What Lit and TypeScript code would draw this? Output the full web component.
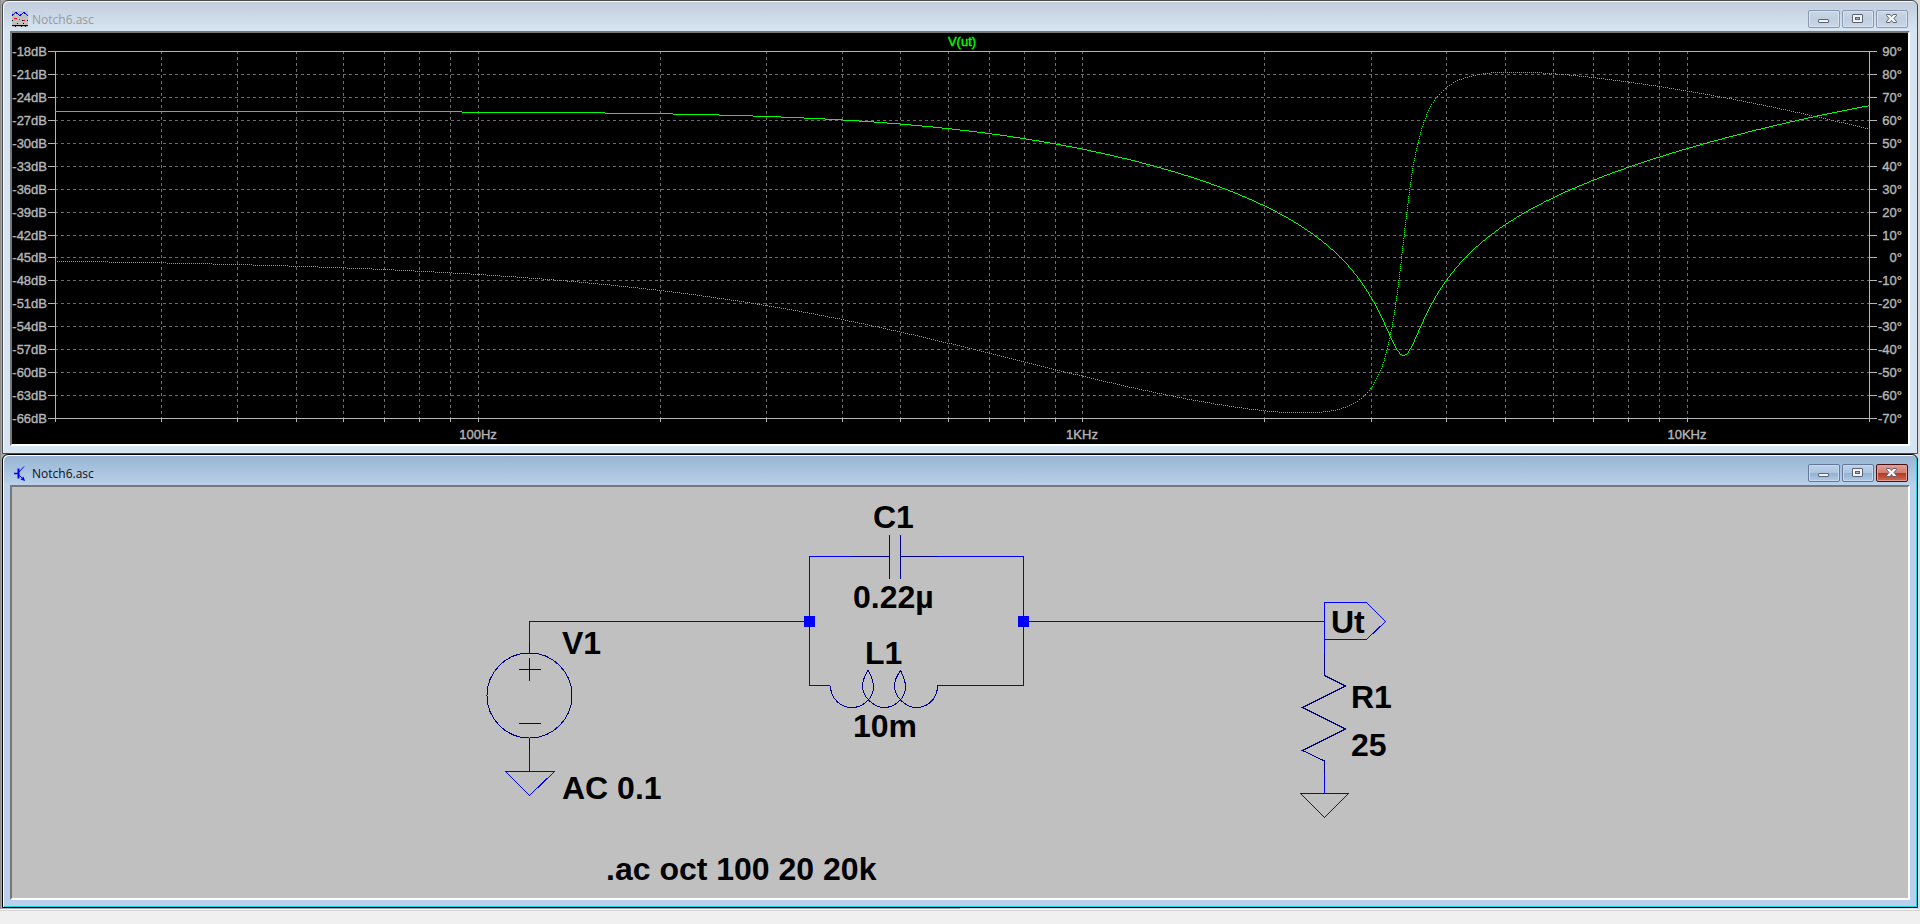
import { LitElement, html, svg, css, nothing } from "lit";
import { customElement, property } from "lit/decorators.js";

const PLOT = { left: 43, right: 1857, top: 18, bottom: 385 };
const F_MIN = 20;
const F_MAX = 20000;

const xOf = (f: number) =>
  PLOT.left + ((PLOT.right - PLOT.left) * Math.log(f / F_MIN)) / Math.log(F_MAX / F_MIN);
const yOf = (t: number) => PLOT.top + (PLOT.bottom - PLOT.top) * t;
const px = (v: number) => Math.round(v) + 0.5;

/** Divider of the parallel L/C trap (coil resistance 24 ohm) into R1. */
function response(f: number) {
  const w = 2 * Math.PI * f;
  const L = 0.01, C = 0.22e-6, rs = 24, R = 25;
  const dr = 1 - w * w * L * C;
  const di = w * rs * C;
  const d2 = dr * dr + di * di;
  const zr = (rs * dr + w * L * di) / d2 + R;
  const zi = (w * L * dr - rs * di) / d2;
  return {
    db: 20 * Math.log10((0.1 * R) / Math.hypot(zr, zi)),
    deg: (-Math.atan2(zi, zr) * 180) / Math.PI,
  };
}

/** Rasterises a trace into unit cells; a step of 2 leaves every other cell dark. */
function trace(pick: (f: number) => number, step: number) {
  const at = (x: number) =>
    Math.round(yOf(pick(F_MIN * Math.pow(F_MAX / F_MIN, (x - PLOT.left) / (PLOT.right - PLOT.left)))));
  let d = "";
  let n = 0;
  let y = at(PLOT.left);
  for (let x = PLOT.left; x <= PLOT.right; x++) {
    const next = at(Math.min(x + 1, PLOT.right));
    const dir = Math.sign(next - y);
    const count = Math.max(1, Math.abs(next - y));
    for (let k = 0; k < count; k++) {
      if (n++ % step === 0) d += `M${x} ${y + dir * k}h1v1h-1z`;
    }
    y = next;
  }
  return d;
}

@customElement("bode-plot")
export class BodePlot extends LitElement {
  static styles = css`
    :host { display: block; background: #000; }
    svg { display: block; width: 100%; height: auto; }
    .axis { stroke: #b4b4b4; shape-rendering: crispEdges; fill: none; }
    .grid { stroke: #6c6c6c; stroke-dasharray: 3 3; shape-rendering: crispEdges; }
    .curve { fill: #00ff00; shape-rendering: crispEdges; }
    text { font: 13px "Liberation Sans", Arial, sans-serif; fill: #b4b4b4; stroke: #b4b4b4; stroke-width: 0.4px; }
    .end { text-anchor: end; }
    .mid { text-anchor: middle; }
    .name { fill: #00ff00; stroke: #00ff00; }
  `;

  render() {
    const rows = Array.from({ length: 17 }, (_, i) => i);
    const freqs: number[] = [];
    for (const dec of [10, 100, 1000, 10000])
      for (let m = 1; m < 10; m++) if (m * dec > F_MIN && m * dec < F_MAX) freqs.push(m * dec);
    const { left, right, top, bottom } = PLOT;
    return html`<svg viewBox="0 0 1896 411" role="img" aria-label="V(ut)">
      ${rows.map((i) => {
        const y = px(yOf(i / 16));
        return svg`
          ${i > 0 && i < 16 ? svg`<line class="grid" x1=${left} x2=${right} y1=${y} y2=${y}></line>` : nothing}
          <line class="axis" x1=${left - 7} x2=${left} y1=${y} y2=${y}></line>
          <line class="axis" x1=${right} x2=${right + 8} y1=${y} y2=${y}></line>
          <text class="end" x="35" y=${y + 4.5}>${-18 - 3 * i}dB</text>
          <text class="end" x="1890" y=${y + 4.5}>${90 - 10 * i}°</text>`;
      })}
      ${freqs.map((f) => {
        const x = px(xOf(f));
        return svg`
          <line class="grid" x1=${x} x2=${x} y1=${top} y2=${bottom}></line>
          <line class="axis" x1=${x} x2=${x} y1=${bottom} y2=${bottom + 4}></line>`;
      })}
      <rect class="axis" x=${left + 0.5} y=${top + 0.5} width=${right - left} height=${bottom - top}></rect>
      <path class="axis" d="M43.5 385v4M1857.5 385v4"></path>
      ${[[100, "100Hz"], [1000, "1KHz"], [10000, "10KHz"]].map(
        ([f, label]) => svg`<text class="mid" x=${Math.round(xOf(f as number))} y="406">${label}</text>`
      )}
      <text class="mid name" x="950" y="13">V(ut)</text>
      <path class="curve" d=${trace((f) => (90 - response(f).deg) / 160, 2)}></path>
      <path class="curve" d=${trace((f) => (-18 - response(f).db) / 48, 1)}></path>
    </svg>`;
  }
}

@customElement("circuit-view")
export class CircuitView extends LitElement {
  static styles = css`
    :host { display: block; background: #c0c0c0; }
    svg { display: block; width: 100%; height: auto; }
    path, circle { fill: none; }
    .wire { stroke: #0000ff; shape-rendering: crispEdges; }
    .part { stroke: #000090; shape-rendering: crispEdges; }
    .node { fill: #0000ff; }
    text { font: bold 32px "Liberation Sans", Arial, sans-serif; fill: #000; }
  `;

  render() {
    return html`<svg viewBox="0 0 1896 411" role="img" aria-label="Notch6.asc">
      <path class="wire" d="M517.5 156V134.5H797.5M797.5 199V69.5H840M925 69.5H1011.5V198.5H925M797.5 198.5H818M1011.5 134.5H1312.5"></path>
      <path class="wire" d="M1312.5 170V115.5H1354.5L1373.5 134.5L1354.5 152.5H1312.5"></path>
      <path class="wire" d="M517.5 262V284.5M493.5 284.5H542.5L517.5 308.5ZM1312.5 286V306.5M1288.5 306.5H1336.5L1312.5 330.5Z"></path>
      <circle class="part" cx="517.5" cy="208.5" r="42.5"></circle>
      <path class="part" d="M517.5 156V166M517.5 251V263M517.5 171V194M507 182.5H529M507 236.5H529"></path>
      <path class="part" d="M840 69.5H877.5M888.5 69.5H925M877.5 48V92M888.5 48V92"></path>
      <path class="part" d="M818.5 198.5C818.5 212 829 220.5 840 220.5C852 220.5 861.5 210 861.5 200C861.5 192 858 187 856 183.5C854 187 850.5 192 850.5 199C850.5 210 862 220.5 872 220.5C884 220.5 893.5 210 893.5 200C893.5 192 890 187 888.5 183.5C886 187 882.5 192 882.5 199C882.5 210 894 220.5 904 220.5C917 220.5 925.5 211 925.5 198.5"></path>
      <path class="part" d="M1312.5 166V188.5L1333.5 199L1290.5 220.5L1333.5 242L1290.5 263.5L1312.5 274V286"></path>
      <rect class="node" x="792" y="129" width="11" height="11"></rect>
      <rect class="node" x="1006" y="129" width="11" height="11"></rect>
      <text x="550" y="167">V1</text>
      <text x="550" y="312">AC 0.1</text>
      <text x="861" y="41">C1</text>
      <text x="841" y="121">0.22µ</text>
      <text x="853" y="177">L1</text>
      <text x="841" y="250">10m</text>
      <text x="1319" y="146">Ut</text>
      <text x="1339" y="221">R1</text>
      <text x="1339" y="269">25</text>
      <text x="594" y="393">.ac oct 100 20 20k</text>
    </svg>`;
  }
}

@customElement("mdi-window")
export class MdiWindow extends LitElement {
  @property() caption = "";
  @property({ type: Boolean, reflect: true }) active = false;

  static styles = css`
    :host { display: block; }
    .frame {
      border: 1px solid #4a4a4a;
      border-radius: 6px 6px 0 0;
      padding: 0 7px 7px;
      background: linear-gradient(#c1cddb, #d7e4f2 30px);
      box-shadow: inset 1px 1px 0 #f4f8fc;
    }
    :host([active]) .frame {
      border-color: #000;
      background: linear-gradient(#98b4d2, #b9d1ea 30px);
      box-shadow: inset 1px 1px 0 #fff, inset -1px -1px 0 #1fd0e6;
    }
    .bar { display: flex; align-items: flex-start; height: 30px; padding: 0 2px; box-sizing: border-box; }
    .icon { display: block; width: 16px; height: 16px; margin: 10px 4px 0 0; }
    .title { flex: 1; font: 12px "Open Sans", "Noto Sans", sans-serif; color: #999; padding-top: 10px; line-height: 18px; }
    :host([active]) .title { color: #111; }
    .buttons { display: flex; gap: 2px; padding-top: 9px; }
    button {
      display: block; width: 32px; height: 18px; padding: 0; border-radius: 2px;
      border: 1px solid #8a98b4; background: linear-gradient(#cbd7e5, #bfcddf 50%, #c8d6e6);
      box-shadow: inset 0 0 0 1px #d9e3ef;
    }
    :host([active]) button {
      border-color: #64779a;
      background: linear-gradient(#bfd2e8, #aac3df 50%, #94b0d0 50%, #b0cae6);
      box-shadow: inset 0 0 0 1px #c6daef;
    }
    :host([active]) .close {
      border-color: #4c0c14;
      background: linear-gradient(#e3a095, #d17b6c 50%, #b8351c 50%, #cc6a52);
      box-shadow: inset 0 0 0 1px #e2a095;
    }
    .glyph { display: block; width: 30px; height: 16px; }
    .client { border: 2px solid; border-color: #777 #fff #fff #777; }
  `;

  private plotIcon() {
    return html`<svg class="icon" viewBox="0 0 16 16" shape-rendering="crispEdges">
      <rect width="16" height="16" fill="#c0c0c0"></rect>
      <path d="M0 4.5L4 1.5L8 4.5L12 1.5L16 4.5" stroke="#0000ff" fill="none"></path>
      <path d="M2 7.5H5M7 8.5H8M11 9.5H13" stroke="#ff0000"></path>
      <path d="M0 9.5H1M10 9.5H11M15 9.5H16M5 12.5H6M11 12.5H12M0 14.5H16M3.5 14V16M9.5 14V16M13.5 14V16" stroke="#000"></path>
    </svg>`;
  }

  private partIcon() {
    return html`<svg class="icon" viewBox="0 0 16 16" fill="none" stroke="#0000ff">
      <path d="M2 8.5H6" stroke-width="1.5"></path>
      <path d="M6.5 3.5V13.5" stroke-width="2"></path>
      <path d="M7 7L12 1.5M7 10L12 15"></path>
      <path d="M13 16L8.5 14.5L11.5 11.5Z" fill="#0000ff" stroke="none"></path>
    </svg>`;
  }

  render() {
    return html`<div class="frame">
      <div class="bar">
        ${this.active ? this.partIcon() : this.plotIcon()}
        <div class="title">${this.caption}</div>
        <div class="buttons">
          <button aria-label="Minimize"><svg class="glyph" viewBox="0 0 30 16">
            <rect x="9.5" y="8.5" width="10" height="3" rx="0.5" fill="#f4f4f4" stroke="#5b6277"></rect></svg></button>
          <button aria-label="Maximize"><svg class="glyph" viewBox="0 0 30 16">
            <rect x="9.5" y="3.5" width="10" height="8" rx="0.5" fill="#f4f4f4" stroke="#5b6277"></rect>
            <rect x="12.5" y="6.5" width="4" height="2" fill="#a0b4d0" stroke="#5b6277"></rect></svg></button>
          <button class="close" aria-label="Close"><svg class="glyph" viewBox="0 0 30 16">
            <path d="M9.5 3.5H13L14.5 5.5L16 3.5H19.5V4.5L17 7.5L19.5 10.5V11.5H16L14.5 9.5L13 11.5H9.5V10.5L12 7.5L9.5 4.5Z" fill="#f4f4f4" stroke="#5b6277"></path></svg></button>
        </div>
      </div>
      <div class="client"><slot></slot></div>
    </div>`;
  }
}

@customElement("app-root")
export class AppRoot extends LitElement {
  static styles = css`
    :host { display: flex; flex-direction: column; min-height: 100vh; background: #f0f0f0; }
    .workspace {
      display: flex; flex-direction: column;
      padding: 0 2px 1px;
      background: linear-gradient(90deg, #8c8c8c 1px, #a8a8a8 1px 50%, #dcdcdc 50%);
      border-bottom: 1px solid #fff;
    }
    .status { flex: 1; border-top: 1px solid #d4d4d4; background: #f0f0f0; }
  `;

  render() {
    return html`
      <div class="workspace">
        <mdi-window caption="Notch6.asc"><bode-plot></bode-plot></mdi-window>
        <mdi-window caption="Notch6.asc" active><circuit-view></circuit-view></mdi-window>
      </div>
      <div class="status"></div>
    `;
  }
}
